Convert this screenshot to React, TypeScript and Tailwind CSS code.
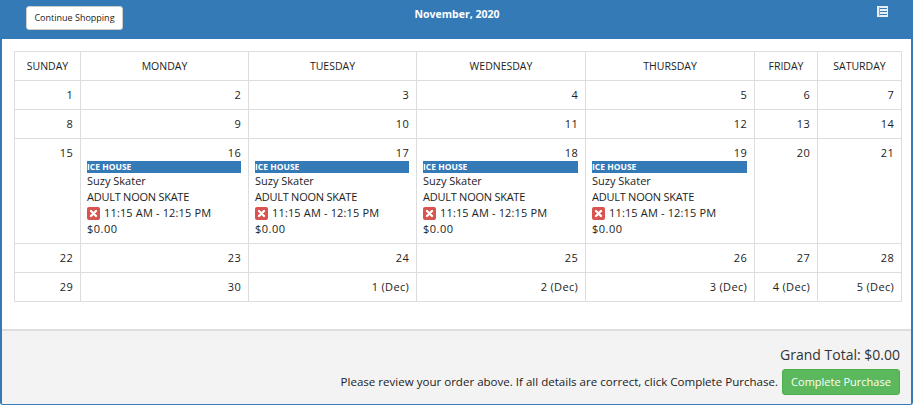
const font = { fontFamily: '"Open Sans", sans-serif' };

const weeks: (number | string)[][] = [
  [1, 2, 3, 4, 5, 6, 7],
  [8, 9, 10, 11, 12, 13, 14],
  [15, 16, 17, 18, 19, 20, 21],
  [22, 23, 24, 25, 26, 27, 28],
  [29, 30, '1 (Dec)', '2 (Dec)', '3 (Dec)', '4 (Dec)', '5 (Dec)'],
];

const days = [
  ['SUNDAY', 'w-[66px]'],
  ['MONDAY', 'w-[168px]'],
  ['TUESDAY', 'w-[168px]'],
  ['WEDNESDAY', 'w-[169px]'],
  ['THURSDAY', 'w-[169px]'],
  ['FRIDAY', 'w-[63px]'],
  ['SATURDAY', 'w-[84px]'],
];

function Booking() {
  return (
    <div className="text-[11px] leading-[16px] text-[#222] tracking-normal">
      <div className="bg-[#337ab7] text-[8.5px] font-bold leading-[12px] text-white h-[12px]">ICE HOUSE</div>
      <div>Suzy Skater</div>
      <div className="tracking-[-0.25px]">ADULT NOON SKATE</div>
      <div className="flex items-center gap-[4px]">
        <svg width="13" height="13" viewBox="0 0 13 13" className="shrink-0">
          <rect width="13" height="13" rx="2" fill="#d9534f" />
          <path d="M4 4l5 5M9 4l-5 5" stroke="#fff" strokeWidth="2.4" strokeLinecap="round" />
        </svg>
        <span className="tracking-[0.15px]">11:15 AM - 12:15 PM</span>
      </div>
      <div className="tracking-[0.5px]">$0.00</div>
    </div>
  );
}

export default function App() {
  return (
    <div style={font} className="w-[913px] h-[405px] flex flex-col bg-white border-x-2 border-b border-[#337ab7] rounded-b-[3px] overflow-hidden text-[#222]">
      <div className="h-[39px] shrink-0 bg-[#337ab7] -mx-[2px] grid grid-cols-[1fr_auto_1fr] items-start pl-[26px] pr-[25px]">
        <button className="mt-[6px] w-[97px] h-[24px] bg-white border border-[#ccc] rounded-[3px] text-[9px] text-[#222]">
          Continue Shopping
        </button>
        <div className="mt-[6px] text-[10.5px] font-bold leading-[16px] text-white">November, 2020</div>
        <svg width="11" height="11" viewBox="0 0 11 11" className="mt-[6px] justify-self-end">
          <rect width="11" height="11" fill="#e8eef4" />
          <path d="M2 2.5h8M2 5.5h8M2 8.5h8" stroke="#337ab7" strokeWidth="1.2" />
          <path d="M2.5 1.5v8" stroke="#9d8fd0" strokeWidth="1" />
        </svg>
      </div>

      <div className="flex-1 pt-[12px] pl-[12px]">
        <table className="w-[887px] table-fixed border-collapse border border-[#ddd] text-[11px]">
          <thead>
            <tr className="h-[29px]">
              {days.map(([name, width]) => (
                <th key={name} className={`${width} border border-[#ddd] pt-[1px] text-[10.5px] font-normal text-center`}>{name}</th>
              ))}
            </tr>
          </thead>
          <tbody>
            {weeks.map((week, i) => (
              <tr key={i} className={i === 2 ? 'h-[105px]' : 'h-[29px]'}>
                {week.map((d, j) => (
                  <td key={j} className="border border-[#ddd] pl-[6px] pr-[7px] pt-[6px] align-top text-right leading-[16px] tracking-[0.3px]">
                    {d}
                    {i === 2 && j >= 1 && j <= 4 && <div className="text-left"><Booking /></div>}
                  </td>
                ))}
              </tr>
            ))}
          </tbody>
        </table>
      </div>

      <div className="h-[75px] shrink-0 bg-[#f3f3f3] border-t-2 border-[#ddd] flex flex-col items-end pr-[11px]">
        <div className="mt-[14px] text-[14px] leading-[20px] text-[#333]">Grand Total: $0.00</div>
        <div className="mt-[4px] flex items-center gap-[4px] text-[11.55px]">
          <span>Please review your order above. If all details are correct, click Complete Purchase.</span>
          <button className="h-[26px] w-[118px] bg-[#5cb85c] border border-[#4cae4c] rounded-[3px] text-white text-[11px]">Complete Purchase</button>
        </div>
      </div>
    </div>
  );
}
